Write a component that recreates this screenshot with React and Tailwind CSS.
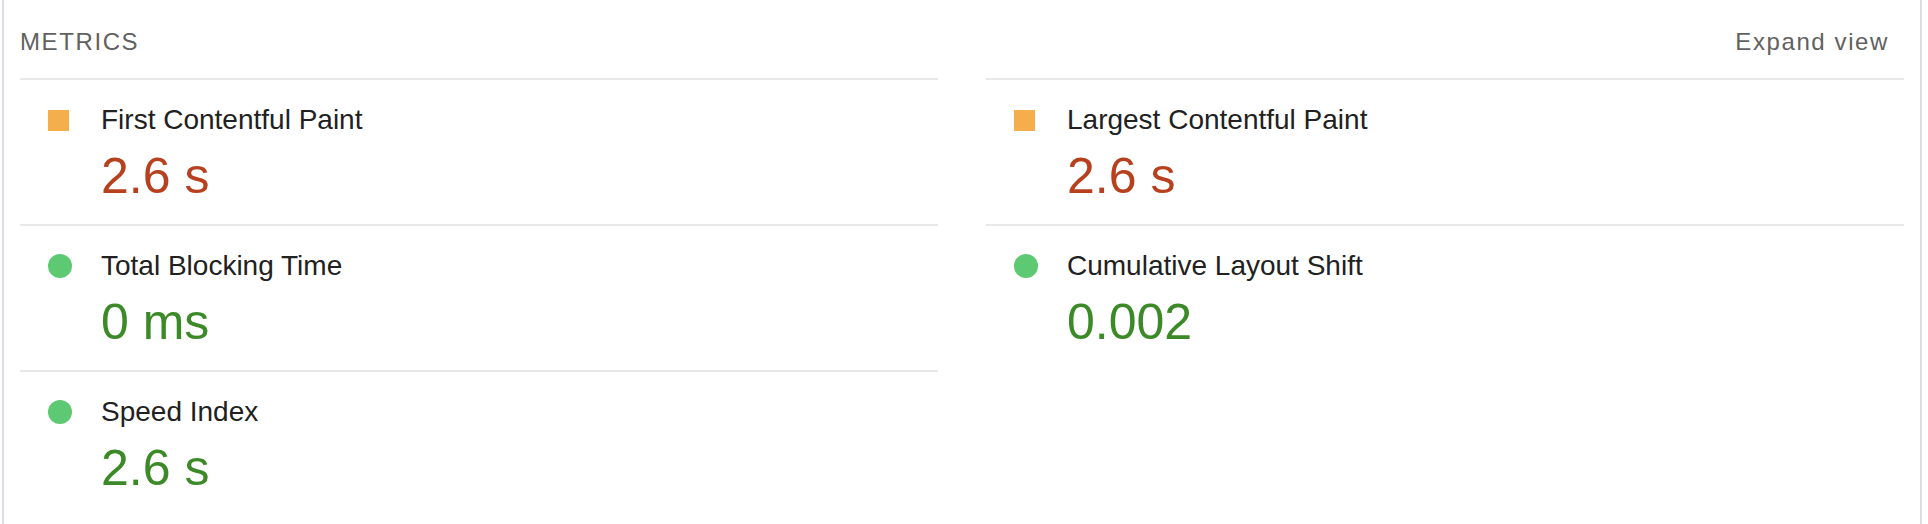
import React from 'react'

const metrics = [
  { id: 'fcp', title: 'First Contentful Paint', value: '2.6 s', rating: 'average' },
  { id: 'lcp', title: 'Largest Contentful Paint', value: '2.6 s', rating: 'average' },
  { id: 'tbt', title: 'Total Blocking Time', value: '0 ms', rating: 'pass' },
  { id: 'cls', title: 'Cumulative Layout Shift', value: '0.002', rating: 'pass' },
  { id: 'si', title: 'Speed Index', value: '2.6 s', rating: 'pass' },
]

const RatingIcon = ({ rating }) => {
  if (rating === 'average') {
    return <span className="block w-[21px] h-[21px] bg-[#f4ae4c]" />
  }
  return <span className="block w-[24px] h-[24px] rounded-full bg-[#5dc972]" />
}

const Metric = ({ title, value, rating }) => (
  <div className="border-t-2 border-[#e8e8e8] pt-[24px] pb-[20px] pl-[28px]">
    <div className="flex items-center">
      <div className="w-[53px] flex items-center">
        <RatingIcon rating={rating} />
      </div>
      <div className="text-[28px] leading-[32px] text-[#212121]">{title}</div>
    </div>
    <div
      className={
        rating === 'average'
          ? 'mt-[12px] pl-[53px] text-[50px] leading-[56px] text-[#b7401f] whitespace-nowrap'
          : 'mt-[12px] pl-[53px] text-[50px] leading-[56px] text-[#3b8a27] whitespace-nowrap'
      }
    >
      {value}
    </div>
  </div>
)

export default function App() {
  return (
    <div className="min-h-[524px] bg-white font-['Liberation_Sans',Arial,sans-serif]">
      <div className="ml-[2px] w-[1920px] min-h-[524px] border-x-2 border-[#dcdce3] px-[16px] pt-[28px]">
        {/* Header */}
        <div className="flex items-center justify-between pb-[22px]">
          <div className="text-[24px] leading-[28px] tracking-[1.6px] uppercase text-[#616161]">
            Metrics
          </div>
          <button className="pr-[15px] text-[24px] leading-[28px] tracking-[1.6px] text-[#616161]">
            Expand view
          </button>
        </div>

        {/* Metric grid */}
        <div className="grid grid-cols-2 gap-x-[48px]">
          {metrics.map(m => (
            <Metric key={m.id} {...m} />
          ))}
        </div>
      </div>
    </div>
  )
}
